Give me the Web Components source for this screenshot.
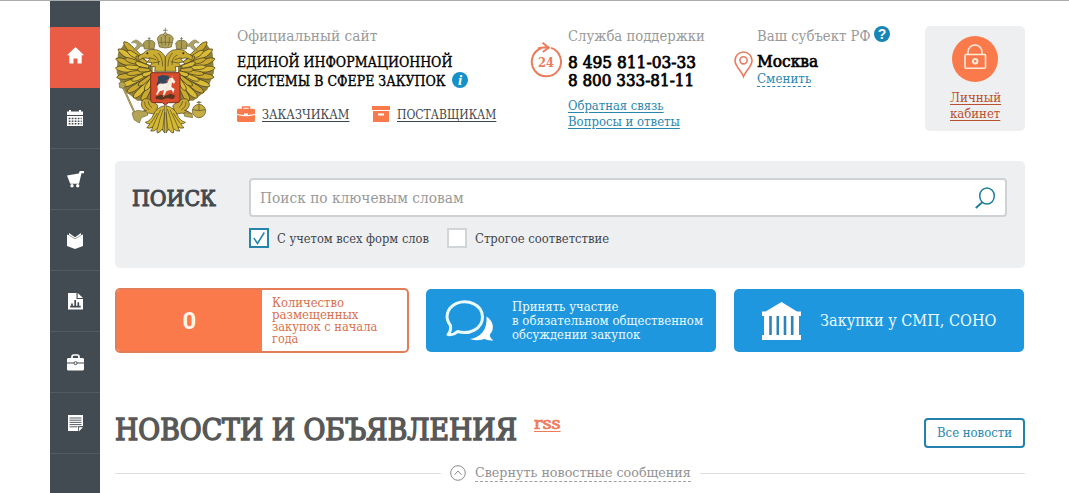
<!DOCTYPE html>
<html lang="ru">
<head>
<meta charset="utf-8">
<title>Единая информационная система в сфере закупок</title>
<style>
  :root {
    --orange: #fb7a4b;
    --blue: #1f97de;
    --link: #2a86ae;
    --panel: #eeeff1;
    --dark: #424b51;
  }

  body {
    margin: 0;
    height: 493px;
    overflow: hidden;
    background: #fff;
    font-family: "Roboto Slab", "DejaVu Serif Condensed", "DejaVu Serif", serif;
    font-size: 13px;
    line-height: 16px;
    color: #3f464c;
  }
</style>
</head>
<body>

<page-shell>
  <side-nav slot="nav"></side-nav>
  <site-header></site-header>
  <search-panel></search-panel>
  <tile-row>
    <count-tile value="0">
      <fit-line width="72">Количество</fit-line>
      <fit-line width="87">размещенных</fit-line>
      <fit-line width="105">закупок с начала</fit-line>
      <fit-line width="26">года</fit-line>
    </count-tile>
    <link-tile icon="chat" style="--pad: 19px; --gap: 17px">
      <fit-line width="107">Принять участие</fit-line>
      <fit-line width="191">в обязательном общественном</fit-line>
      <fit-line width="128">обсуждении закупок</fit-line>
    </link-tile>
    <link-tile icon="bank" style="--pad: 28px; --gap: 19px; font-size: 16px; line-height: 21px">
      <fit-line width="176">Закупки у СМП, СОНО</fit-line>
    </link-tile>
  </tile-row>
  <news-head></news-head>
  <collapse-bar><fit-line width="216">Свернуть новостные сообщения</fit-line></collapse-bar>
</page-shell>

<script>
/*
 * Base: clones the class template into an open shadow root
 */

class BaseElement extends HTMLElement {
  constructor() {
    super();
    this.attachShadow({ mode: "open" });
    let t = document.createElement("template");
    t.innerHTML = this.template;
    this.shadowRoot.append(t.content.cloneNode(true));
  }
}

/*
 * Fit Line: one line of text, set to an exact width
 */

class FitLine extends BaseElement {
  get template() {
    return `
    <style>
      :host { display: block; white-space: nowrap; flex-shrink: 0; }
      span {
        display: inline-block;
        vertical-align: top;
        transform-origin: 0 0;
        text-decoration: var(--line, none);
        text-underline-offset: 2px;
        text-decoration-thickness: 1px;
      }
    </style>
    <span><slot></slot></span>
    `;
  }

  connectedCallback() {
    const width = Number(this.getAttribute("width"));
    const span = this.shadowRoot.querySelector("span");
    this.style.width = `${width}px`;
    span.style.transform = `scaleX(${width / span.offsetWidth})`;
  }
}

/*
 * Icons
 */

const ICONS = {
  home: [17, 17, `<path fill="#fff" d="M8.500 0 17 8.200h-2.300V16.500h-4.200v-5h-4v5H2.300V8.200H0z"/>`],
  calendar: [16, 16, `<path fill="#fff" d="M0 1.500h2V0h2v1.500h8V0h2v1.500h2V5H0z"/><path fill="#fff" d="M0 6h16v10H0z"/>
    <path stroke="#424b51" stroke-width="1.500" stroke-dasharray="1.700 1.300" d="M1.700 8.500h13M1.700 11.200h13M1.700 13.800h13"/>`],
  cart: [17, 17, `<path fill="#fff" d="M0 4.500 11.800 2.500l1-2.500H17v2.200h-2.500l-2.500 10.500H3.200z"/><circle fill="#fff" cx="5" cy="14.800" r="1.700"/><circle fill="#fff" cx="10.700" cy="14.800" r="1.700"/>`],
  book: [16, 17, `<path fill="#fff" d="M0 2.500 2 3.300V1l6 4.200L14 1v2.300l2-.8V14l-8 3-8-3z"/><path fill="none" stroke="#424b51" stroke-width=".5" d="M2 3.300l6 3.500 6-3.500"/>`],
  report: [15, 17, `<path fill="#fff" d="M0 0h8.500v6H15v10.500H0z"/><path fill="#fff" d="M9.700 0 15 4.900H9.700z"/><path stroke="#424b51" stroke-width="1.700" d="M4 13.500v-3M7.200 13.500V7M10.300 13.500V9.200M2.200 13.700h10.500"/>`],
  briefcase: [17, 17, `<path fill="none" stroke="#fff" stroke-width="1.700" d="M5 5V2.800Q5 1 6.800 1h3.400Q12 1 12 2.800V5"/><path fill="#fff" d="M1 4h15l1 1v3.600H0V5zM0 9.500h17v6.200l-1 .8H1l-1-.8z"/><circle cx="8.500" cy="9.200" r="1.500" fill="#fff" stroke="#424b51"/>`],
  notes: [15, 17, `<path fill="#fff" d="M0 0h15v11l-5 .3V16H0z"/><path fill="#fff" d="M10.800 12.200H15l-4.200 4.300z"/><path stroke="#424b51" stroke-width=".9" d="M1.500 3h12M1.500 5.200h12M1.500 7.400h12M1.500 9.600h12M1.500 11.800h8"/>`],
  case: [18, 16, `<path fill="none" stroke="#fb7a4b" stroke-width="1.400" d="M5.500 3V1h7v2"/><path fill="#fb7a4b" d="M1 2.700h16l1 1V8L11 9V7.500H7V9L0 8V3.700zM0 9l7 1.200h4L18 9v6l-1 1H1l-1-1z"/>`],
  box: [18, 16, `<path fill="#fb7a4b" d="M0 0h18v4H0zM1 5h16v11H1z"/><path fill="#fff" d="M6 7.500h6v2H6z"/>`],
  info: [16, 16, `<circle cx="8" cy="8" r="8" fill="#1590c8"/><text x="8" y="13" text-anchor="middle" font-family="Liberation Serif, serif" font-weight="bold" font-style="italic" font-size="15" fill="#fff">i</text>`],
  help: [16, 16, `<circle cx="8" cy="8" r="8" fill="#1586b5"/><text x="8" y="13" text-anchor="middle" font-family="Liberation Sans, sans-serif" font-weight="bold" font-size="14" fill="#fff">?</text>`],
  hours: [32, 36, `<g fill="none" stroke="#ec7b5c" stroke-width="2"><path d="M11.500 6A14.600 14.600 0 1 0 21 5.900"/><path d="M8 6.500Q12 4.800 18 5.700M12.500.8l6.300 5-6 4.200"/></g>
    <text x="16" y="24.500" text-anchor="middle" font-family="DejaVu Serif Condensed, DejaVu Serif, serif" font-weight="bold" font-size="12.500" textLength="16" lengthAdjust="spacingAndGlyphs" fill="#ec7b5c">24</text>`],
  pin: [19, 27, `<g fill="none" stroke="#e87c62" stroke-width="1.600"><path d="M9.500 25.500C7.500 20 1 15.500 1 9.500a8.500 8.500 0 0 1 17 0C18 15.500 11.500 20 9.500 25.500z"/><circle cx="9.500" cy="9.300" r="3.600"/></g>`],
  lock: [46, 46, `<circle cx="23" cy="23" r="23" fill="#fb7a4b"/><g fill="none" stroke="#ffe9d8" stroke-width="1.600"><rect x="13" y="18.500" width="20.500" height="13.700" rx="1"/><path d="M16 18.500V16a7 7 0 0 1 14 0v2.500"/><circle cx="23.200" cy="25.200" r="2.200" stroke-width="2"/></g>`],
  search: [20, 22, `<g fill="none" stroke="#237e99" stroke-width="1.500"><ellipse cx="12" cy="9" rx="7.300" ry="8"/><path stroke-width="2" d="M7 15.500.8 21"/></g>`],
  tick: [14, 14, `<path fill="none" stroke="#2784ac" stroke-width="1.500" d="M1.800 7 5.500 12.500 12.300 1.500"/>`],
  chat: [50, 42, `<g transform="translate(1 1)"><path fill="none" stroke="#e9fbff" stroke-width="3" stroke-linejoin="round" d="M4.500 24.500C-1.500 17 .5 7 10.500 2.300 22-2 36.500 3.500 36.500 16 36.500 28 23 34 11.500 30.500 9 33 5.500 34 2 33.500 4.500 31 5 28 4.500 24.500z"/><path fill="#fff" d="M40.500 15.500C47.500 20 49 28.500 43.800 33.500 43.800 36 45 38 47.500 39.200 44 39.800 40.500 39 38.500 37.800 34 39.800 29 39.500 24 38 34.500 36.500 41.500 29 40.500 15.500z"/></g>`],
  bank: [39, 38, `<path fill="#fff" d="M0 9.500h3.500L19.500 0l15.500 9.500h4V14h-2v19h2v5H0v-5h2V14H0z"/><path stroke="#2f83b8" stroke-width="2.600" d="M8.500 14v19M15.800 14v19M23 14v19M30.200 14v19"/>`],
  up: [16, 16, `<g fill="none" stroke="#8b8b8b"><circle cx="8" cy="8" r="7.300"/><path d="M4.500 9.800 8 6l3.500 3.800"/></g>`],
};

class SiteIcon extends BaseElement {
  get template() {
    return `
    <style>
      :host { display: block; flex-shrink: 0; line-height: 0; }
      svg { display: block; overflow: visible; }
    </style>
    <div></div>
    `;
  }

  connectedCallback() {
    const [w, h, body] = ICONS[this.getAttribute("name")];
    this.shadowRoot.querySelector("div").innerHTML = `<svg width="${w}" height="${h}" viewBox="0 0 ${w} ${h}">${body}</svg>`;
  }
}

/*
 * Coat of arms. The left half is drawn and then mirrored around x=166.
 */

class StateEmblem extends BaseElement {
  get template() {
    return `
    <style>
      :host { display: block; }
      svg { display: block; }
    </style>
    <svg width="102" height="109" viewBox="15 31 306 327">
      <defs>
        <g id="half" stroke="#4b4321" stroke-width="2.200" stroke-linejoin="round">
          <path fill="#93813a" stroke="none" d="M44 82 60 118 96 140 128 150V255H82L40 222 20 170 24 112z"/>
          ${this.feathers()}
          <path fill="#aa9f68" stroke="#8c8251" stroke-width="2" d="M104 92 88 78Q76 66 64 82q14-4 18 6l-12 16q14 2 22-12z"/>
          <path fill="#c9ac31" d="M166 125Q156 104 136 102 112 98 100 113L86 120q-4 8 2 14 8-8 18-7l14 2-8 10 14 2-6 12 16 0-2 14h32z"/>
          <path fill="none" stroke-width="2" d="M130 118q16 6 16 30M144 112q14 12 14 40M118 126l20 6M128 142l22-4"/>
          <circle cx="112" cy="113" r="3" fill="#332d13" stroke="none"/>
          <path fill="#aa9c50" stroke="#665c32" stroke-width="2" d="M103 100 100 82q6-10 18-8 11-2 17 8l-3 18z"/>
          <path fill="none" stroke="#665c32" stroke-width="2" d="M117.500 76v22M117.500 64v10M113 69h9"/>
          <path fill="#c8aa34" d="M124 254q-26-14-30 10 0 14 12 20l-20 10 6 8 24-10 20 4 8-26z"/>
          <path fill="none" stroke-width="2" d="M104 258q0 18 14 24M114 256q2 14 12 20M96 288l14-4"/>
          <path fill="#d4b833" d="M164 270q-26 6-34 28-8 18-24 22 6 6 14 4-6 10-10 12 10 4 18-2-2 8-6 12 12 2 18-6l2 12q10-2 14-12l8 12z"/>
          <path fill="none" stroke-width="2" d="M160 280q-10 26-18 60M152 282q-12 24-24 52M142 292q-10 18-20 30M164 290l-6 54"/>
        </g>
      </defs>
      <use href="#half"/>
      <use href="#half" transform="translate(332 0) scale(-1 1)"/>
      <g stroke="#665c32" stroke-width="2">
        <path fill="#b3a45a" d="M148 94 142 68q6-14 24-12 18-2 24 12l-6 26q-18 6-36 0z"/>
        <path fill="none" d="M166 60v30M154 64q-2 14 3 26M178 64q2 14-3 26M145 80h42M166 36v22M159 44h14"/>
        <circle cx="166" cy="56" r="5" fill="#c1b268"/>
      </g>
      <path stroke="#8d8146" stroke-width="6" d="M36 208 76 296"/>
      <path stroke="#c5b975" stroke-width="2" d="M36 208 76 296"/>
      <path fill="#b4a556" stroke="#746937" stroke-width="2" d="M27 202l12-4 8 9-6 11-12-2zM66 292l16-8 28 4 4 10-20 8-6 16-16-10z"/>
      <path fill="#b5a34e" stroke="#746937" stroke-width="2" d="M222 290 246 294 248 306 224 302z"/>
      <circle cx="267" cy="286" r="20" fill="#c5ad41" stroke="#746937" stroke-width="2.500"/>
      <path fill="none" stroke="#746937" stroke-width="3" d="M248 282q19 6 38 0M267 256v28M260 260h14"/>
      <path fill="#d74c2c" stroke="#7b3018" stroke-width="3" d="M122 175q0-4 4-4h80q4 0 4 4v78q0 8-9 8h-26l-9 7-9-7h-26q-9 0-9-8z"/>
      <path fill="#32485f" d="M143 183l14-5 18 2 4 8-10 6 2 14-14 2-6-10-8 10-4-4 6-12z"/>
      <path fill="#f7efe8" d="M142 214q2-12 16-10l14-2 6-14 10-2 8 12-4 6-6-4-2 14 10 6-4 12-6-10-14 4-8 14-4 0 4-16-12 2-8 12-4-2 6-14z"/>
      <path fill="#5b351f" d="M136 243l16-6 14 3 16-6 14 6-6 10-20-2-14 4-18-2z"/>
      <path fill="none" stroke="#efdfaf" stroke-width="1.500" d="M188 180 160 244"/>
    </svg>
    `;
  }

  feathers() {
    const list = [
      [42, 78, 98, 132], [25, 100, 98, 144], [18, 128, 98, 156], [17, 156, 100, 166],
      [20, 184, 102, 174], [32, 210, 106, 182], [50, 230, 112, 190], [70, 246, 118, 198], [94, 255, 124, 206],
      [52, 104, 104, 138], [44, 128, 106, 148], [44, 152, 108, 158], [50, 174, 112, 166],
      [64, 194, 118, 172], [84, 210, 124, 180], [104, 224, 128, 186],
      [78, 122, 110, 142], [76, 140, 116, 154], [82, 160, 120, 164], [96, 178, 126, 170],
    ];
    return list.map(([x, y, rx, ry], i) => {
      const len = Math.hypot(x - rx, y - ry);
      const a = Math.atan2(y - ry, x - rx) * 180 / Math.PI;
      const w = i < 9 ? 10 : 8;
      return `<path transform="translate(${rx} ${ry}) rotate(${a})" fill="${i % 2 ? "#d9bb36" : "#c9a92f"}"
        d="M0 ${-w * .6}L${len * .7} ${-w}Q${len} ${-w * .7} ${len} 0 ${len * .9} ${w * .8} ${len * .7} ${w * .7}L0 ${w * .6}z"/>`;
    }).join("");
  }
}

/*
 * Page Shell
 */

class PageShell extends BaseElement {
  get template() {
    return `
    <style>
      :host {
        display: grid;
        grid-template-columns: 50px 910px;
        column-gap: 15px;
        box-sizing: border-box;
        height: 493px;
        padding-left: 50px;
        border-top: 1px solid #a9adae;
      }
      main { display: flex; flex-direction: column; padding-top: 25px; }
    </style>
    <slot name="nav"></slot>
    <main><slot></slot></main>
    `;
  }
}

class SideNav extends BaseElement {
  get template() {
    const items = ["home", "calendar", "cart", "book", "report", "briefcase", "notes"];
    return `
    <style>
      :host { display: block; padding-top: 26px; background: var(--dark); }
      a {
        display: flex;
        align-items: center;
        justify-content: center;
        box-sizing: border-box;
        height: 61px;
        border-bottom: 1px solid #525b62;
      }
      a.home { background: #e95c45; border-color: #e95c45; padding-bottom: 4px; }
    </style>
    ${items.map(name => `<a class="${name}"><site-icon name="${name}"></site-icon></a>`).join("")}
    `;
  }
}

/*
 * Header
 */

class SiteHeader extends BaseElement {
  get template() {
    return `
    <style>
      :host { display: grid; grid-template-columns: 122px 293px 38px 166px 23px 168px 100px; height: 107px; }
      .caption { font-size: 15px; line-height: 20px; color: #999; margin-bottom: 7px; }
      .name { font-size: 15px; line-height: 19px; color: #000; -webkit-text-stroke: .35px #000; }
      .phone { font-size: 17px; line-height: 18px; color: #000; -webkit-text-stroke: .75px #000; }
      .row { display: flex; }
      .for { margin-top: 15px; line-height: 17px; --line: underline; }
      .for fit-line { margin: 0 23px 0 7px; }
      .links { margin-top: 9px; color: var(--link); --line: underline; }
      .city { font-size: 16px; line-height: 18px; color: #000; -webkit-text-stroke: .6px #000; }
      .change { box-sizing: border-box; height: 16px; color: var(--link); border-bottom: 1px dashed var(--link); }
      .cabinet {
        display: flex;
        flex-direction: column;
        align-items: center;
        box-sizing: border-box;
        height: 105px;
        padding-top: 10px;
        border-radius: 5px;
        background: var(--panel);
        color: #b9512f;
        --line: underline;
      }
      .cabinet site-icon { margin-bottom: 8px; }
    </style>
    <state-emblem></state-emblem>
    <div>
      <fit-line class="caption" width="140">Официальный сайт</fit-line>
      <fit-line class="name" width="215">ЕДИНОЙ ИНФОРМАЦИОННОЙ</fit-line>
      <div class="row">
        <fit-line class="name" width="209">СИСТЕМЫ В СФЕРЕ ЗАКУПОК</fit-line>
        <site-icon name="info" style="margin-left: 6px"></site-icon>
      </div>
      <div class="row for">
        <site-icon name="case"></site-icon><fit-line width="87">ЗАКАЗЧИКАМ</fit-line>
        <site-icon name="box"></site-icon><fit-line width="99">ПОСТАВЩИКАМ</fit-line>
      </div>
    </div>
    <site-icon name="hours" style="margin-top: 16px"></site-icon>
    <div>
      <fit-line class="caption" width="137">Служба поддержки</fit-line>
      <fit-line class="phone" width="128">8 495 811-03-33</fit-line>
      <fit-line class="phone" width="126">8 800 333-81-11</fit-line>
      <div class="links">
        <fit-line width="96">Обратная связь</fit-line>
        <fit-line width="112">Вопросы и ответы</fit-line>
      </div>
    </div>
    <site-icon name="pin" style="margin-top: 25px"></site-icon>
    <div>
      <div class="row">
        <fit-line class="caption" width="113">Ваш субъект РФ</fit-line>
        <site-icon name="help" style="margin-left: 4px"></site-icon>
      </div>
      <fit-line class="city" width="61">Москва</fit-line>
      <fit-line class="change" width="54">Сменить</fit-line>
    </div>
    <div class="cabinet">
      <site-icon name="lock"></site-icon>
      <fit-line width="51">Личный</fit-line>
      <fit-line width="50">кабинет</fit-line>
    </div>
    `;
  }
}

/*
 * Search
 */

class SearchPanel extends BaseElement {
  get template() {
    return `
    <style>
      :host {
        display: grid;
        grid-template-columns: 116.500px 758px;
        grid-template-rows: 39px 20px;
        row-gap: 11px;
        box-sizing: border-box;
        height: 107px;
        margin-top: 28px;
        padding: 17px 0 0 17px;
        border-radius: 5px;
        background: var(--panel);
      }
      .title { font-size: 23px; line-height: 41px; color: #424950; -webkit-text-stroke: 1px #424950; }
      .field {
        display: flex;
        align-items: center;
        justify-content: space-between;
        box-sizing: border-box;
        padding: 0 10px 0 9px;
        border: 2px solid #cfd2d4;
        border-radius: 4px;
        background: #fff;
        font-size: 15px;
        line-height: 20px;
        color: #999;
      }
      .options { grid-column: 2; display: flex; align-items: center; gap: 8px; }
      .check {
        display: flex;
        align-items: center;
        justify-content: center;
        box-sizing: border-box;
        width: 20px;
        height: 20px;
        border: 2px solid #d2d5d8;
        background: #fff;
      }
      .check.on { border-color: #2784ac; }
    </style>
    <fit-line class="title" width="84">ПОИСК</fit-line>
    <div class="field">
      <fit-line width="204">Поиск по ключевым словам</fit-line>
      <site-icon name="search"></site-icon>
    </div>
    <div class="options">
      <div class="check on"><site-icon name="tick"></site-icon></div>
      <fit-line width="152" style="margin-right: 10px; padding-top: 1px">С учетом всех форм слов</fit-line>
      <div class="check"></div>
      <fit-line width="134" style="padding-top: 1px">Строгое соответствие</fit-line>
    </div>
    `;
  }
}

/*
 * Tiles
 */

class TileRow extends BaseElement {
  get template() {
    return `
    <style>
      :host {
        display: grid;
        grid-template-columns: 294px 290px 290px;
        align-items: center;
        height: 65px;
        margin-top: 20px;
        column-gap: 17px;
      }
      ::slotted(link-tile:last-child) { margin-left: 1px; margin-right: -1px; }
    </style>
    <slot></slot>
    `;
  }
}

class CountTile extends BaseElement {
  get template() {
    return `
    <style>
      :host {
        display: grid;
        grid-template-columns: 145px 1fr;
        box-sizing: border-box;
        height: 65px;
        border: 2px solid #e47d57;
        border-radius: 5px;
        background: #fff;
        overflow: hidden;
      }
      .value {
        display: flex;
        align-items: center;
        justify-content: center;
        background: var(--orange);
        color: #fff5ea;
        font: bold 24px/30px Roboto, sans-serif;
      }
      .text { padding: 7px 0 0 10px; font-size: 12px; line-height: 12px; color: #d8714e; }
    </style>
    <div class="value"></div>
    <div class="text"><slot></slot></div>
    `;
  }

  connectedCallback() {
    this.shadowRoot.querySelector(".value").textContent = this.getAttribute("value");
  }
}

class LinkTile extends BaseElement {
  get template() {
    return `
    <style>
      :host {
        display: flex;
        align-items: center;
        gap: var(--gap);
        box-sizing: border-box;
        height: 63px;
        padding-left: var(--pad);
        border-radius: 5px;
        background: var(--blue);
        color: #e9faff;
        font-size: 13px;
        line-height: 14px;
      }
    </style>
    <site-icon name="chat"></site-icon>
    <div><slot></slot></div>
    `;
  }

  connectedCallback() {
    const icon = document.createElement("site-icon");
    icon.setAttribute("name", this.getAttribute("icon"));
    this.shadowRoot.querySelector("site-icon").replaceWith(icon);
  }
}

/*
 * News
 */

class NewsHead extends BaseElement {
  get template() {
    return `
    <style>
      :host { display: flex; height: 36px; margin-top: 60px; align-items: flex-start; }
      .title { font-size: 29px; line-height: 34px; color: #575857; -webkit-text-stroke: 1.400px #575857; }
      .rss { margin-left: 17px; font-size: 16px; line-height: 22px; color: #ee7a5a; -webkit-text-stroke: .7px #ee7a5a; --line: underline; }
      .all {
        display: flex;
        align-items: center;
        justify-content: center;
        box-sizing: border-box;
        width: 101px;
        height: 30px;
        margin: 5px 0 0 auto;
        border: 2px solid #2381ab;
        border-radius: 4px;
        color: var(--link);
      }
    </style>
    <fit-line class="title" width="402">НОВОСТИ И ОБЪЯВЛЕНИЯ</fit-line>
    <fit-line class="rss" width="27">rss</fit-line>
    <div class="all"><fit-line width="75">Все новости</fit-line></div>
    `;
  }
}

class CollapseBar extends BaseElement {
  get template() {
    return `
    <style>
      :host { display: flex; align-items: center; height: 18px; margin-top: 15px; color: #929292; }
      i { flex: 1; height: 1px; background: #dedede; }
      site-icon { margin: 0 9px; }
      .text { box-sizing: border-box; height: 18px; padding-top: 1px; margin-right: 9px; border-bottom: 1px dashed #a0a0a0; }
      i:first-child { flex: 0 0 326px; }
    </style>
    <i></i>
    <site-icon name="up"></site-icon>
    <div class="text"><slot></slot></div>
    <i></i>
    `;
  }
}

customElements.define("page-shell", PageShell);
customElements.define("side-nav", SideNav);
customElements.define("site-header", SiteHeader);
customElements.define("search-panel", SearchPanel);
customElements.define("tile-row", TileRow);
customElements.define("count-tile", CountTile);
customElements.define("link-tile", LinkTile);
customElements.define("news-head", NewsHead);
customElements.define("collapse-bar", CollapseBar);
customElements.define("state-emblem", StateEmblem);
customElements.define("site-icon", SiteIcon);
// Last, so that every line is measured inside its final parent
customElements.define("fit-line", FitLine);
</script>
</body>
</html>
